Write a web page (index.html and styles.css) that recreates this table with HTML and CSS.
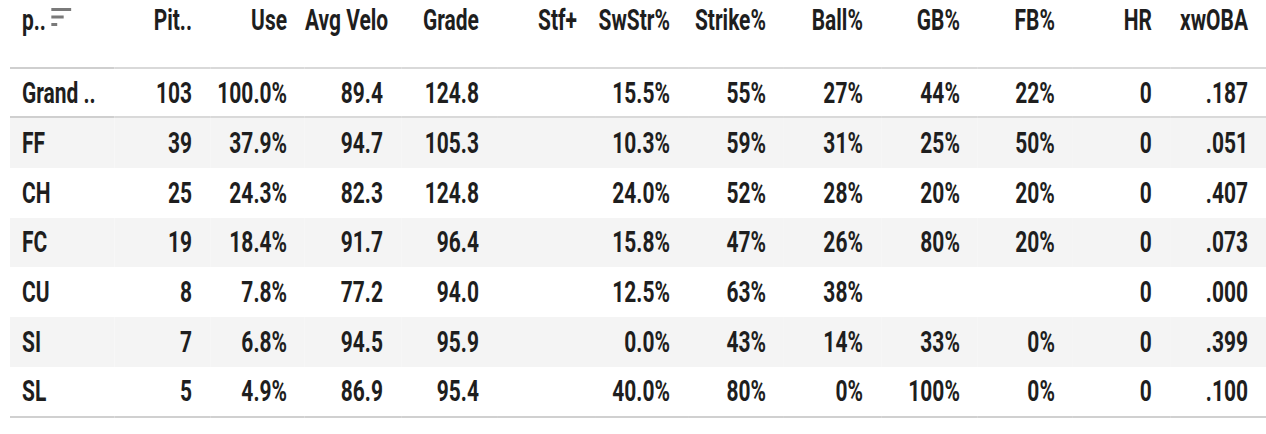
FILE: index.html
```html
<!DOCTYPE html>
<html lang="en">
<head>
<meta charset="utf-8">
<title>Pitch table</title>
<link rel="stylesheet" href="styles.css">
</head>
<body>
<div class="wrap">
<table class="stats">
  <colgroup>
    <col class="c-pitch"><col class="c-96"><col class="c-95"><col class="c-96"><col class="c-96"><col class="c-98"><col class="c-93"><col class="c-96"><col class="c-97"><col class="c-97"><col class="c-95"><col class="c-97"><col class="c-96">
  </colgroup>
  <thead>
    <tr>
      <th class="first"><span class="hd">p..</span><svg class="sort" width="29" height="19" viewBox="0 0 29 19"><rect x="0" y="0" width="28.2" height="3" fill="#7a7a7a"/><rect x="0" y="7.5" width="17.6" height="3" fill="#7a7a7a"/><rect x="0" y="15" width="8.5" height="3" fill="#7a7a7a"/></svg></th>
      <th>Pit..</th>
      <th>Use</th>
      <th>Avg Velo</th>
      <th>Grade</th>
      <th>Stf+</th>
      <th>SwStr%</th>
      <th>Strike%</th>
      <th>Ball%</th>
      <th>GB%</th>
      <th>FB%</th>
      <th>HR</th>
      <th>xwOBA</th>
    </tr>
  </thead>
  <tbody>
    <tr class="total">
      <td class="first">Grand ..</td><td>103</td><td>100.0%</td><td>89.4</td><td>124.8</td><td></td><td>15.5%</td><td>55%</td><td>27%</td><td>44%</td><td>22%</td><td>0</td><td>.187</td>
    </tr>
    <tr class="odd">
      <td class="first">FF</td><td>39</td><td>37.9%</td><td>94.7</td><td>105.3</td><td></td><td>10.3%</td><td>59%</td><td>31%</td><td>25%</td><td>50%</td><td>0</td><td>.051</td>
    </tr>
    <tr>
      <td class="first">CH</td><td>25</td><td>24.3%</td><td>82.3</td><td>124.8</td><td></td><td>24.0%</td><td>52%</td><td>28%</td><td>20%</td><td>20%</td><td>0</td><td>.407</td>
    </tr>
    <tr class="odd">
      <td class="first">FC</td><td>19</td><td>18.4%</td><td>91.7</td><td>96.4</td><td></td><td>15.8%</td><td>47%</td><td>26%</td><td>80%</td><td>20%</td><td>0</td><td>.073</td>
    </tr>
    <tr>
      <td class="first">CU</td><td>8</td><td>7.8%</td><td>77.2</td><td>94.0</td><td></td><td>12.5%</td><td>63%</td><td>38%</td><td></td><td></td><td>0</td><td>.000</td>
    </tr>
    <tr class="odd">
      <td class="first">SI</td><td>7</td><td>6.8%</td><td>94.5</td><td>95.9</td><td></td><td>0.0%</td><td>43%</td><td>14%</td><td>33%</td><td>0%</td><td>0</td><td>.399</td>
    </tr>
    <tr class="last">
      <td class="first">SL</td><td>5</td><td>4.9%</td><td>86.9</td><td>95.4</td><td></td><td>40.0%</td><td>80%</td><td>0%</td><td>100%</td><td>0%</td><td>0</td><td>.100</td>
    </tr>
  </tbody>
</table>
</div>
</body>
</html>
```
FILE: styles.css
```css
html, body {
  margin: 0;
  padding: 0;
  background: #ffffff;
  overflow: hidden;
}

/* The table is laid out in "wide" units and compressed horizontally
   to reproduce the condensed typeface of the original. */
.wrap {
  margin-left: 10px;
  width: 1256px;
  overflow: hidden;
}

.stats {
  border-collapse: collapse;
  table-layout: fixed;
  width: 1769px;
  transform: scaleX(0.71);
  transform-origin: 0 0;
  font-family: Roboto, "Liberation Sans", Arial, sans-serif;
  font-size: 29.5px;
  font-weight: 700;
  color: #1e1e1e;
}

.c-pitch { width: 146.5px; }
.c-93 { width: 131px; }
.c-95 { width: 133.8px; }
.c-96 { width: 135.2px; }
.c-97 { width: 136.6px; }
.c-98 { width: 138px; }

.stats th,
.stats td {
  padding: 0 25.4px 0 0;
  text-align: right;
  white-space: nowrap;
  line-height: 34px;
}

.stats th {
  height: 68px;
  vertical-align: top;
  padding-top: 3px;
  padding-bottom: 0;
  box-sizing: border-box;
  font-weight: 700;
  border-bottom: 2px solid #d9d9d9;
}

.stats th.first,
.stats td.first {
  text-align: left;
  padding-left: 16.9px;
  padding-right: 0;
}

.stats th.first {
  border-bottom-color: #cfcfcf;
}

.hd {
  display: inline-block;
  vertical-align: top;
}

.sort {
  display: inline-block;
  vertical-align: top;
  margin-top: 5px;
  margin-left: 7px;
}

.stats td {
  height: 49.67px;
  vertical-align: middle;
}

.stats tr.total td {
  height: 47.3px;
  border-bottom: 2px solid #d9d9d9;
}

.stats tr.total td.first {
  border-bottom-color: #cfcfcf;
}

.stats tr.odd td {
  background: #f4f4f4;
}

.stats tr.last td {
  border-bottom: 2px solid #d0d0d0;
}
```
